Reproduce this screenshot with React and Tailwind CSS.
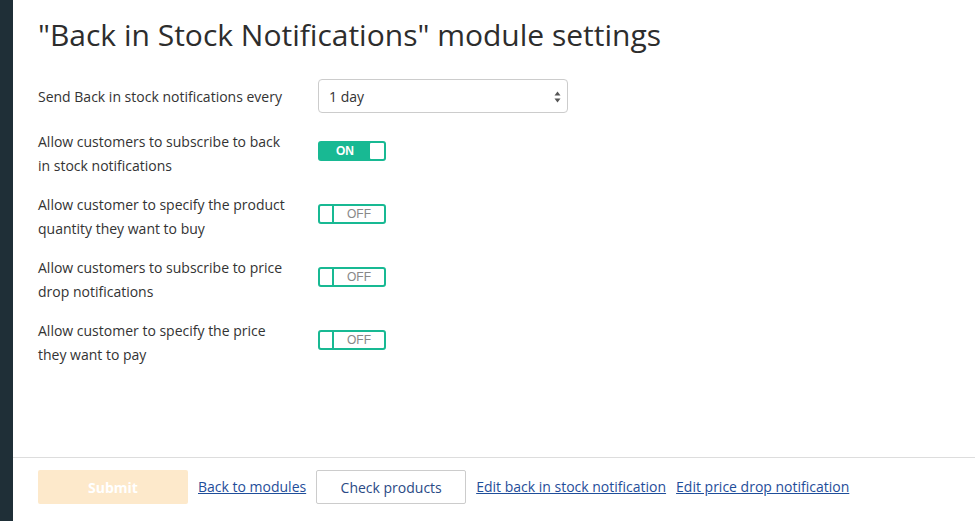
import React from "react";

function ToggleOn() {
  return (
    <div className="mt-[11px] flex h-[20px] w-[68px] items-center rounded-[3px] bg-[#18b993] p-[2px]">
      <span className="flex-1 text-center text-[12px] font-bold leading-none text-white" style={{ fontFamily: '"Liberation Sans", Arial, sans-serif' }}>ON</span>
      <span className="h-[16px] w-[14px] rounded-[1px] bg-white" />
    </div>
  );
}

function ToggleOff() {
  return (
    <div className="mt-[11px] flex h-[20px] w-[68px] items-stretch rounded-[3px] border-2 border-[#18b993] bg-white">
      <span className="w-[14px] border-r-2 border-[#18b993]" />
      <span className="flex flex-1 items-center justify-center text-[12px] leading-none text-[#888]" style={{ fontFamily: '"Liberation Sans", Arial, sans-serif' }}>OFF</span>
    </div>
  );
}

function Row({ label, on }) {
  return (
    <div className="flex items-start">
      <div className="w-[280px] pr-[30px] text-[14px] leading-[24px] text-[#333]">{label}</div>
      {on ? <ToggleOn /> : <ToggleOff />}
    </div>
  );
}

export default function App() {
  return (
    <div className="flex h-[521px] w-[975px] overflow-hidden bg-white" style={{ fontFamily: '"Open Sans", "Noto Sans", sans-serif' }}>
      <div className="w-[13px] shrink-0 bg-[#1f2f37]" />
      <div className="flex flex-1 flex-col">
        <div className="flex-1 border-b border-[#dddddd] pl-[25px]">
          <h1 className="mt-[16px] text-[30px] leading-[38px] text-[#2d2d2d]">"Back in Stock Notifications" module settings</h1>
          <div className="mt-[25px] flex items-center">
            <div className="w-[280px] text-[14px] text-[#333]">Send Back in stock notifications every</div>
            <div className="relative flex h-[34px] w-[250px] items-center rounded-[4px] border border-[#cccccc] bg-white pl-[10px] text-[14px] text-[#333]">
              1 day
              <svg className="absolute right-[6px] top-[11px]" width="7" height="12" viewBox="0 0 7 12">
                <path d="M3.5 0.5 L6.5 4.5 L0.5 4.5 Z" fill="#555" />
                <path d="M3.5 11.5 L6.5 7.5 L0.5 7.5 Z" fill="#555" />
              </svg>
            </div>
          </div>
          <div className="mt-[17px] flex flex-col gap-[15px]">
            <Row label="Allow customers to subscribe to back in stock notifications" on />
            <Row label="Allow customer to specify the product quantity they want to buy" />
            <Row label="Allow customers to subscribe to price drop notifications" />
            <Row label="Allow customer to specify the price they want to pay" />
          </div>
        </div>
        <div className="flex h-[63px] shrink-0 items-start gap-[10px] pl-[25px] pt-[12px] text-[14px]">
          <button className="h-[34px] w-[150px] rounded-[2px] bg-[#fde9cb] font-bold text-white">Submit</button>
          <a href="#" className="leading-[34px] text-[#1f4e9a] underline">Back to modules</a>
          <button className="h-[34px] w-[150px] rounded-[2px] border border-[#cccccc] bg-white text-[#2a4a85]">Check products</button>
          <a href="#" className="leading-[34px] text-[#1f4e9a] underline">Edit back in stock notification</a>
          <a href="#" className="leading-[34px] text-[#1f4e9a] underline">Edit price drop notification</a>
        </div>
      </div>
    </div>
  );
}
